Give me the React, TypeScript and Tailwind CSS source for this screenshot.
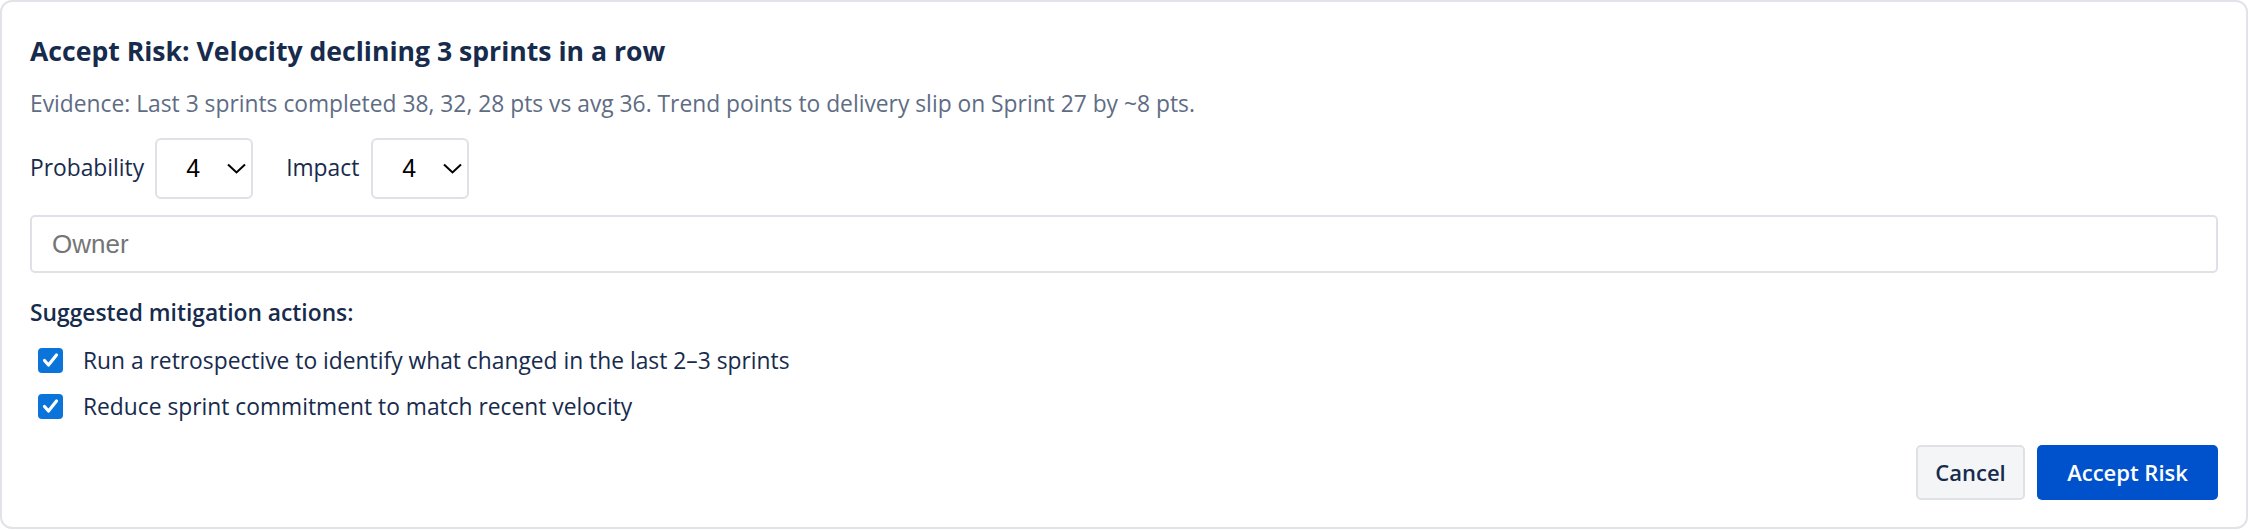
import { useState } from "react";

const font = { fontFamily: '"Open Sans", "Noto Sans", sans-serif' };

function Select({ value }: { value: string }) {
  return (
    <div className="relative w-[98px] h-[61px]">
      <select
        defaultValue={value}
        className="appearance-none w-full h-full bg-white border-2 border-[#dfe1e6] rounded-[6px] pl-[29px] text-[25px] text-black outline-none"
        style={{ fontFamily: '"Liberation Sans", Arial, sans-serif' }}
      >
        {["1", "2", "3", "4", "5"].map((v) => (
          <option key={v} value={v}>
            {v}
          </option>
        ))}
      </select>
      <svg
        className="absolute right-[7px] top-[25px] pointer-events-none"
        width="19"
        height="11"
        viewBox="0 0 19 11"
        fill="none"
      >
        <path d="M1 1.5 L9.5 9.5 L18 1.5" stroke="#000" strokeWidth="2" />
      </svg>
    </div>
  );
}

function Check({ label }: { label: string }) {
  const [on, setOn] = useState(true);
  return (
    <label className="flex items-center h-[25px] pl-[8px] cursor-pointer" onClick={() => setOn(!on)}>
      <span
        className={
          on
            ? "w-[25px] h-[25px] rounded-[4px] bg-[#0b74da] flex items-center justify-center"
            : "w-[25px] h-[25px] rounded-[4px] border-2 border-gray-500 bg-white"
        }
      >
        {on && (
          <svg width="25" height="25" viewBox="0 0 25 25" fill="none">
            <path d="M6.5 12.5 L10.5 17 L18.5 7" stroke="#fff" strokeWidth="3.2" strokeLinecap="round" strokeLinejoin="round" />
          </svg>
        )}
      </span>
      <span className="ml-[20px] text-[22.8px] leading-[25px] text-[#172b4d]">{label}</span>
    </label>
  );
}

export default function App() {
  return (
    <div className="w-full h-[530px] bg-white" style={font}>
      <div className="w-[2248px] h-[529px] border-2 border-[#e1e3e8] rounded-[12px] px-[28px] pt-[31px] flex flex-col">
        <h2 className="text-[26.6px] font-bold text-[#172b4d] leading-[36px]">
          Accept Risk: Velocity declining 3 sprints in a row
        </h2>
        <p className="mt-[19px] text-[22.8px] text-[#5e6c84] leading-[32px]">
          Evidence: Last 3 sprints completed 38, 32, 28 pts vs avg 36. Trend points to delivery slip on Sprint 27 by ~8 pts.
        </p>
        <div className="mt-[18px] flex items-center">
          <span className="text-[22.8px] text-[#172b4d] mr-[11px]">Probability</span>
          <Select value="4" />
          <span className="ml-[33px] text-[22.8px] text-[#172b4d] mr-[12px]">Impact</span>
          <Select value="4" />
        </div>
        <input
          placeholder="Owner"
          className="mt-[16px] h-[58px] w-full border-2 border-[#dfe1e6] rounded-[5px] pl-[20px] text-[26px] placeholder:text-[#757575] outline-none"
          style={{ fontFamily: '"Liberation Sans", Arial, sans-serif' }}
        />
        <div className="mt-[24px] text-[22.8px] font-semibold text-[#172b4d] leading-[32px]">
          Suggested mitigation actions:
        </div>
        <div className="mt-[19px] flex flex-col gap-[21px]">
          <Check label="Run a retrospective to identify what changed in the last 2–3 sprints" />
          <Check label="Reduce sprint commitment to match recent velocity" />
        </div>
        <div className="mt-[26px] flex justify-end gap-[12px]">
          <button className="h-[55px] w-[109px] bg-[#f4f5f7] border-2 border-[#dfe1e6] rounded-[5px] text-[22px] font-semibold text-[#172b4d]">
            Cancel
          </button>
          <button className="h-[55px] w-[181px] bg-[#0052cc] rounded-[5px] text-[22px] font-semibold text-white">
            Accept Risk
          </button>
        </div>
      </div>
    </div>
  );
}
